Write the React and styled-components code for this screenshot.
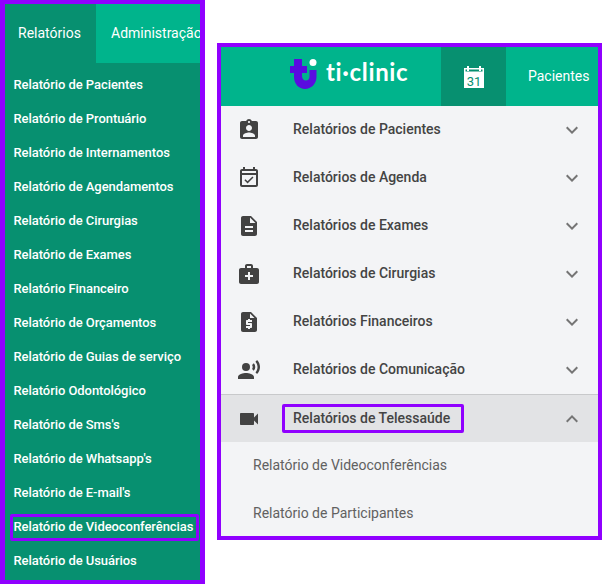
import React from 'react'
import styled, { createGlobalStyle } from 'styled-components'
import {
  MdAssignmentInd,
  MdOutlineEventAvailable,
  MdDescription,
  MdMedicalServices,
  MdRequestQuote,
  MdRecordVoiceOver,
  MdVideocam,
  MdKeyboardArrowDown,
  MdKeyboardArrowUp,
} from 'react-icons/md'

const GlobalStyle = createGlobalStyle`
  html, body {
    margin: 0;
    padding: 0;
    background: #fff;
    font-family: Roboto, "Liberation Sans", sans-serif;
  }
  * {
    box-sizing: border-box;
  }
`
const Page = styled.div`
  width: 603px;
  height: 584px;
  display: flex;
  align-items: flex-start;
  gap: 12px;
  overflow: hidden;
`
const LeftPanel = styled.div`
  width: 205px;
  height: 584px;
  flex-shrink: 0;
  border: solid #9000ff;
  border-width: 4px 5px;
  background: #079070;
  overflow: hidden;
`
const Tabs = styled.div`
  display: flex;
  height: 59px;
  background: #00b48c;
`
const Tab = styled.div`
  width: 91px;
  flex-shrink: 0;
  display: flex;
  align-items: center;
  padding-left: ${(props) => (props.active ? '13px' : '15px')};
  padding-bottom: 1px;
  background: ${(props) => (props.active ? '#079070' : 'transparent')};
  color: #fff;
  font-size: 14px;
  white-space: nowrap;
`
const ReportList = styled.div`
  display: flex;
  flex-direction: column;
  padding-top: 4px;
`
const ReportItem = styled.div`
  position: relative;
  height: 34px;
  display: flex;
  align-items: center;
  padding-left: 8.5px;
  color: #fff;
  font-size: 13px;
  font-weight: 500;
  letter-spacing: -0.06px;
  white-space: nowrap;
  ${(props) =>
    props.marked &&
    `
    &::after {
      content: '';
      position: absolute;
      left: 5px;
      right: 1px;
      top: 5px;
      bottom: 2px;
      border: 3px solid #9000ff;
      border-radius: 2px;
    }
  `}
`
const RightPanel = styled.div`
  width: 385px;
  height: 497px;
  margin-top: 43px;
  flex-shrink: 0;
  border: 4px solid #9000ff;
  background: #f3f4f6;
  overflow: hidden;
`
const TopBar = styled.div`
  height: 59px;
  display: flex;
  background: #00b48c;
`
const LogoArea = styled.div`
  width: 220px;
  flex-shrink: 0;
  display: flex;
  align-items: center;
  gap: 9px;
  padding: 0 0 6px 69px;
`
const LogoText = styled.span`
  color: #fff;
  font-family: Lato, sans-serif;
  font-size: 24px;
  font-weight: 700;
  letter-spacing: 0.65px;
  line-height: 1;
  margin-bottom: 3px;
`
const CalendarTab = styled.div`
  width: 65px;
  flex-shrink: 0;
  display: flex;
  align-items: center;
  justify-content: center;
  background: #079070;
`
const TopLabel = styled.div`
  padding: 0 0 2px 22px;
  display: flex;
  align-items: center;
  color: #fff;
  font-size: 14px;
  white-space: nowrap;
`
const Row = styled.div`
  height: 48px;
  display: flex;
  align-items: center;
  position: relative;
  background: ${(props) => (props.open ? '#e2e3e5' : 'transparent')};
  border-top: ${(props) => (props.open ? '1px solid #c8c9cb' : 'none')};
  color: #444;
`
const RowIcon = styled.div`
  width: 72px;
  flex-shrink: 0;
  display: flex;
  justify-content: center;
  padding-right: 16px;
  color: #424242;
  font-size: 24px;
  line-height: 0;
`
const RowLabel = styled.div`
  flex: 1;
  font-size: 14px;
  font-weight: 500;
  white-space: nowrap;
  position: relative;
  margin-bottom: 2px;
  ${(props) =>
    props.marked &&
    `
    &::after {
      content: '';
      position: absolute;
      left: -11px;
      top: -6px;
      width: 176px;
      height: 23px;
      border: 3px solid #9000ff;
      border-radius: 2px;
      box-sizing: content-box;
    }
  `}
`
const Chevron = styled.div`
  width: 24px;
  margin-right: 14px;
  font-size: 24px;
  line-height: 0;
  color: #757575;
`
const SubRow = styled.div`
  height: 48px;
  display: flex;
  align-items: center;
  padding: 0 0 2px 32px;
  color: #616161;
  font-size: 14px;
`

const TiLogo = () => (
  <svg width="27" height="30" viewBox="0 0 27 30">
    <path
      d="M4 0H12V7H17V14H12V17C12 19.500 13.500 21.500 16 21.500C18 21.500 19.500 20 19.500 17.500V11H26.500V18C26.500 25 21 30 15 30C9 30 4 25 4 18V14H0V7H4Z"
      fill="#5a0be0"
    />
    <circle cx="23" cy="3.500" r="3.500" fill="#fff" />
  </svg>
)

const CalendarIcon = () => (
  <svg width="20" height="22" viewBox="0 0 20 22">
    <path d="M0 2h3V0h2v2h10V0h2v2h3v20H0z" fill="#fff" />
    <rect x="1.500" y="3.500" width="17" height="2" fill="#079070" />
    <rect x="3" y="1" width="2" height="4" fill="#fff" />
    <rect x="15" y="1" width="2" height="4" fill="#fff" />
    <text
      x="10"
      y="20"
      textAnchor="middle"
      fontFamily="Roboto, sans-serif"
      fontSize="13"
      fill="#079070"
    >
      31
    </text>
  </svg>
)

const leftReports = [
  'de Pacientes',
  'de Prontuário',
  'de Internamentos',
  'de Agendamentos',
  'de Cirurgias',
  'de Exames',
  'Financeiro',
  'de Orçamentos',
  'de Guias de serviço',
  'Odontológico',
  "de Sms's",
  "de Whatsapp's",
  "de E-mail's",
  'de Videoconferências',
  'de Usuários',
]

const groups = [
  { label: 'Relatórios de Pacientes', Icon: MdAssignmentInd },
  { label: 'Relatórios de Agenda', Icon: MdOutlineEventAvailable },
  { label: 'Relatórios de Exames', Icon: MdDescription },
  { label: 'Relatórios de Cirurgias', Icon: MdMedicalServices },
  { label: 'Relatórios Financeiros', Icon: MdRequestQuote },
  { label: 'Relatórios de Comunicação', Icon: MdRecordVoiceOver },
]

const App = () => {
  return (
    <Page>
      <GlobalStyle />
      <LeftPanel>
        <Tabs>
          <Tab active>Relatórios</Tab>
          <Tab>Administração</Tab>
        </Tabs>
        <ReportList>
          {leftReports.map((name) => (
            <ReportItem key={name} marked={name === 'de Videoconferências'}>
              Relatório {name}
            </ReportItem>
          ))}
        </ReportList>
      </LeftPanel>

      <RightPanel>
        <TopBar>
          <LogoArea>
            <TiLogo />
            <LogoText>ti·clinic</LogoText>
          </LogoArea>
          <CalendarTab>
            <CalendarIcon />
          </CalendarTab>
          <TopLabel>Pacientes</TopLabel>
        </TopBar>
        {groups.map(({ label, Icon }) => (
          <Row key={label}>
            <RowIcon>
              <Icon />
            </RowIcon>
            <RowLabel>{label}</RowLabel>
            <Chevron>
              <MdKeyboardArrowDown />
            </Chevron>
          </Row>
        ))}
        <Row open>
          <RowIcon>
            <MdVideocam />
          </RowIcon>
          <RowLabel marked>Relatórios de Telessaúde</RowLabel>
          <Chevron>
            <MdKeyboardArrowUp />
          </Chevron>
        </Row>
        <SubRow>Relatório de Videoconferências</SubRow>
        <SubRow>Relatório de Participantes</SubRow>
      </RightPanel>
    </Page>
  )
}

export default App
